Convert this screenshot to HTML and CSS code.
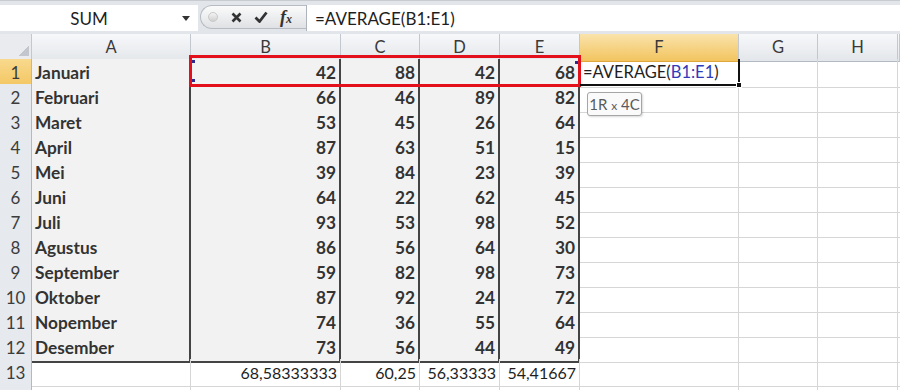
FILE: index.html
```html
<!DOCTYPE html>
<html lang="id">
<head>
    <meta charset="UTF-8">
    <title>Rata-rata</title>
    <link rel="stylesheet" href="styles.css">
</head>
<body>
    <!-- Baris rumus -->
    <div class="formula-bar">
        <div class="name-box">
            <span class="name">SUM</span>
            <svg class="arrow" width="8" height="5" viewBox="0 0 8 5"><path d="M0 0h8L4 5z" fill="#333"/></svg>
        </div>
        <div class="fx-group">
            <span class="knob"></span>
            <svg class="btn" width="11" height="11" viewBox="0 0 11 11"><path d="M1.5 1.5L9.5 9.5M9.5 1.5L1.5 9.5" stroke="#333" stroke-width="2.6" fill="none"/></svg>
            <svg class="btn" width="14" height="12" viewBox="0 0 14 12"><path d="M1.5 6.5L5.5 10.5L12.5 1.5" stroke="#333" stroke-width="2.8" fill="none"/></svg>
            <span class="fx">f<small>x</small></span>
        </div>
        <div class="formula-input">=AVERAGE(B1:E1)</div>
    </div>

    <!-- Lembar kerja -->
    <div class="sheet">
        <div class="row head">
            <div class="corner"></div>
            <div class="col">A</div><div class="col">B</div><div class="col">C</div><div class="col">D</div>
            <div class="col">E</div><div class="col active">F</div><div class="col">G</div><div class="col">H</div><div class="col"></div>
        </div>
        <div class="row">
            <div class="rh active">1</div>
            <div class="c d txt">Januari</div><div class="c d">42</div><div class="c d">88</div><div class="c d">42</div><div class="c d">68</div>
            <div class="c formula">=AVERAGE(<span class="ref">B1:E1</span>)</div><div class="c"></div><div class="c"></div><div class="c"></div>
        </div>
        <div class="row">
            <div class="rh">2</div>
            <div class="c d txt">Februari</div><div class="c d">66</div><div class="c d">46</div><div class="c d">89</div><div class="c d">82</div>
            <div class="c"></div><div class="c"></div><div class="c"></div><div class="c"></div>
        </div>
        <div class="row">
            <div class="rh">3</div>
            <div class="c d txt">Maret</div><div class="c d">53</div><div class="c d">45</div><div class="c d">26</div><div class="c d">64</div>
            <div class="c"></div><div class="c"></div><div class="c"></div><div class="c"></div>
        </div>
        <div class="row">
            <div class="rh">4</div>
            <div class="c d txt">April</div><div class="c d">87</div><div class="c d">63</div><div class="c d">51</div><div class="c d">15</div>
            <div class="c"></div><div class="c"></div><div class="c"></div><div class="c"></div>
        </div>
        <div class="row">
            <div class="rh">5</div>
            <div class="c d txt">Mei</div><div class="c d">39</div><div class="c d">84</div><div class="c d">23</div><div class="c d">39</div>
            <div class="c"></div><div class="c"></div><div class="c"></div><div class="c"></div>
        </div>
        <div class="row">
            <div class="rh">6</div>
            <div class="c d txt">Juni</div><div class="c d">64</div><div class="c d">22</div><div class="c d">62</div><div class="c d">45</div>
            <div class="c"></div><div class="c"></div><div class="c"></div><div class="c"></div>
        </div>
        <div class="row">
            <div class="rh">7</div>
            <div class="c d txt">Juli</div><div class="c d">93</div><div class="c d">53</div><div class="c d">98</div><div class="c d">52</div>
            <div class="c"></div><div class="c"></div><div class="c"></div><div class="c"></div>
        </div>
        <div class="row">
            <div class="rh">8</div>
            <div class="c d txt">Agustus</div><div class="c d">86</div><div class="c d">56</div><div class="c d">64</div><div class="c d">30</div>
            <div class="c"></div><div class="c"></div><div class="c"></div><div class="c"></div>
        </div>
        <div class="row">
            <div class="rh">9</div>
            <div class="c d txt">September</div><div class="c d">59</div><div class="c d">82</div><div class="c d">98</div><div class="c d">73</div>
            <div class="c"></div><div class="c"></div><div class="c"></div><div class="c"></div>
        </div>
        <div class="row">
            <div class="rh">10</div>
            <div class="c d txt">Oktober</div><div class="c d">87</div><div class="c d">92</div><div class="c d">24</div><div class="c d">72</div>
            <div class="c"></div><div class="c"></div><div class="c"></div><div class="c"></div>
        </div>
        <div class="row">
            <div class="rh">11</div>
            <div class="c d txt">Nopember</div><div class="c d">74</div><div class="c d">36</div><div class="c d">55</div><div class="c d">64</div>
            <div class="c"></div><div class="c"></div><div class="c"></div><div class="c"></div>
        </div>
        <div class="row">
            <div class="rh">12</div>
            <div class="c d txt">Desember</div><div class="c d">73</div><div class="c d">56</div><div class="c d">44</div><div class="c d">49</div>
            <div class="c"></div><div class="c"></div><div class="c"></div><div class="c"></div>
        </div>
        <div class="row">
            <div class="rh">13</div>
            <div class="c"></div><div class="c num">68,58333333</div><div class="c num">60,25</div><div class="c num">56,33333</div><div class="c num">54,41667</div>
            <div class="c"></div><div class="c"></div><div class="c"></div><div class="c"></div>
        </div>
        <div class="row">
            <div class="rh"></div>
            <div class="c"></div><div class="c"></div><div class="c"></div><div class="c"></div><div class="c"></div>
            <div class="c"></div><div class="c"></div><div class="c"></div><div class="c"></div>
        </div>

        <!-- Sorotan rentang B1:E1 -->
        <div class="range-box">
            <span class="handle h1"></span>
            <span class="handle h2"></span>
            <span class="handle h3"></span>
        </div>
        <!-- Sel aktif F1 -->
        <div class="active-cell"><span class="fill-handle"></span></div>
        <div class="tip">1R <small>x</small> 4C</div>
    </div>
</body>
</html>
```

FILE: styles.css
```css
* {
    margin: 0;
    padding: 0;
    box-sizing: border-box;
}

body {
    font-family: Lato, "Open Sans", sans-serif;
    font-size: 16.5px;
    color: #1e1e1e;
    background: #fff;
    overflow: hidden;
}

/* Baris rumus */
.formula-bar {
    display: flex;
    height: 34px;
    padding: 4px 0 3px 0;
    background: #e2e5e9;
    border-top: 1px solid #c8ccd1;
}

.name-box {
    width: 198px;
    background: #fff;
    display: flex;
    align-items: center;
}

.name-box .name {
    flex: 1;
    text-align: center;
    padding-right: 4px;
    font-size: 17px;
}

.name-box .arrow {
    margin-right: 8px;
}

.fx-group {
    width: 106px;
    height: 24px;
    margin-left: 2px;
    display: flex;
    align-items: center;
    background: linear-gradient(#fbfbfb, #dfe1e4);
    border: 1px solid #b7bcc3;
    border-right: none;
    border-radius: 12px 0 0 12px;
}

.knob {
    width: 10px;
    height: 10px;
    margin: 0 13px 0 7px;
    border-radius: 50%;
    background: linear-gradient(#f4f4f4, #d0d0d0);
    border: 1px solid #c9c9c9;
}

.btn {
    margin-right: 12px;
}

.fx {
    font-family: "Liberation Serif", serif;
    font-style: italic;
    font-weight: bold;
    font-size: 18px;
    color: #333;
}

.fx small {
    font-size: 12px;
}

.formula-input {
    flex: 1;
    background: #fff;
    border-left: 1px solid #aeb4bb;
    padding-left: 8px;
    line-height: 27px;
    font-size: 17px;
}

/* Lembar kerja */
.sheet {
    position: relative;
}

.row {
    display: grid;
    grid-template-columns: 32px 159px 150px 79px 80px 80px 159px 79px 80px 1fr;
    height: 25px;
}

.head .col,
.corner {
    background: linear-gradient(#f7f8fa, #e3e6ea);
    border-right: 1px solid #c3c8cf;
    border-bottom: 1px solid #b3b9c1;
    text-align: center;
    line-height: 27px;
    color: #3a3a3a;
}

.corner {
    background: linear-gradient(135deg, transparent 55%, #c3c7cd 55%) no-repeat;
    background-size: 12px 12px;
    background-position: 17px 10px;
    background-color: #e9ebee;
}

.head .col.active {
    background: linear-gradient(#fae3ab, #f2c45f);
    border-bottom-color: #e0a73c;
}

.rh {
    background: #e6e9ed;
    border-right: 1px solid #b3b9c1;
    border-bottom: 1px solid #c8ccd2;
    text-align: center;
    line-height: 27px;
    color: #3c3c3c;
    font-size: 17px;
}

.rh.active {
    background: linear-gradient(#f9d98e, #f3c660);
    border-bottom-color: #e0a73c;
}

.c {
    border-right: 1px solid #d6d6d6;
    border-bottom: 1px solid #d6d6d6;
    line-height: 27px;
    padding: 0 3px;
    text-align: right;
    white-space: nowrap;
}

.d {
    background: #f2f2f2;
    border-right: 2px solid #444;
    border-bottom: 2px solid #444;
    font-weight: bold;
    font-size: 17.3px;
    color: #333;
}

.c.num {
    font-size: 16px;
}

.c.txt {
    text-align: left;
}

.c.formula {
    text-align: left;
    overflow: visible;
}

.ref {
    color: #2f3bb8;
}

/* Kotak merah di atas B1:E1 */
.range-box {
    position: absolute;
    left: 189px;
    top: 21px;
    width: 392px;
    height: 32px;
    border: 3px solid #e3101b;
}

.handle {
    position: absolute;
    width: 3px;
    height: 3px;
    background: #2c2a8c;
}

.h1 { left: 0; top: 2px; }
.h2 { left: 0; bottom: 2px; }
.h3 { right: 0; top: 3px; }

.active-cell {
    position: absolute;
    left: 580px;
    top: 25px;
    width: 160px;
    height: 27px;
    border-right: 2px solid #111;
    border-bottom: 2px solid #111;
}

.fill-handle {
    position: absolute;
    right: -4px;
    bottom: -4px;
    width: 6px;
    height: 6px;
    background: #111;
    border: 1px solid #fff;
}

.tip {
    position: absolute;
    left: 587px;
    top: 58px;
    width: 55px;
    height: 24px;
    border: 1px solid #a6a6a6;
    border-radius: 3px;
    background: #fafafa;
    box-shadow: 1px 1px 2px rgba(0, 0, 0, 0.15);
    color: #5a5a5a;
    font-size: 15px;
    line-height: 22px;
    text-align: center;
}

.tip small {
    font-size: 12px;
}
```
